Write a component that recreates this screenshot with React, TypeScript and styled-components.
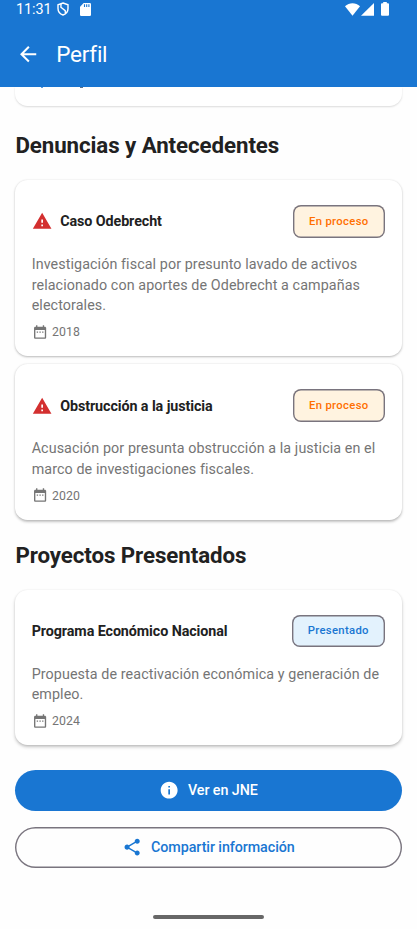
import React from "react";
import styled, { createGlobalStyle } from "styled-components";

const Global = createGlobalStyle`
  *, *::before, *::after { box-sizing: border-box; }
  body { margin: 0; background: #fefefe; font-family: Roboto, "Noto Sans", sans-serif; }
`;

const Screen = styled.div`
  width: 417px;
  height: 929px;
  overflow: hidden;
  display: flex;
  flex-direction: column;
  background: #fefefe;
  color: #212121;
`;

const Header = styled.header`
  flex: none;
  height: 87px;
  background: #1976d2;
  color: #fff;
`;

const StatusBar = styled.div`
  height: 18px;
  display: flex;
  align-items: center;
  justify-content: space-between;
  padding: 0 28px 0 16px;
`;

const StatusGroup = styled.div<{ $gap: number }>`
  display: flex;
  align-items: center;
  gap: ${(p) => p.$gap}px;
`;

const Clock = styled.span`
  width: 35.5px;
  padding-top: 2px;
  font-size: 14.4px;
  line-height: 18px;
  letter-spacing: -0.08px;
`;

const AppBar = styled.div`
  display: flex;
  align-items: center;
  height: 72px;
  padding: 0 0 0 16px;
  gap: 16px;
`;

const AppTitle = styled.h1`
  margin: 0;
  font-size: 22.5px;
  font-weight: 400;
  line-height: 28px;
  letter-spacing: -0.25px;
`;

const Content = styled.main`
  display: flex;
  flex-direction: column;
  padding: 0 15px;
`;

const Card = styled.section<{ $depth: number }>`
  border-radius: 12.5px;
  background: #fff;
  padding: 25px 17px 16.3px 16.7px;
  box-shadow: 0 ${(p) => p.$depth}px ${(p) => p.$depth + 1.5}px rgba(0, 0, 0, 0.22),
    0 0.5px 2px rgba(0, 0, 0, 0.07);
`;

const PreviousCard = styled.section`
  height: 19px;
  border-radius: 0 0 12.5px 12.5px;
  background: #fff;
  box-shadow: 0 1px 2px rgba(0, 0, 0, 0.14);
`;

const Descenders = styled.div`
  display: flex;
  gap: 36.5px;
  padding-left: 26px;
`;

const Descender = styled.span<{ $width: number; $color: string }>`
  width: ${(p) => p.$width}px;
  height: 1px;
  background: ${(p) => p.$color};
`;

const SectionTitle = styled.h2<{ $top: number; $bottom: number }>`
  margin: ${(p) => p.$top}px 0 ${(p) => p.$bottom}px 0.4px;
  font-size: 22.3px;
  font-weight: 700;
  line-height: 28px;
  letter-spacing: -0.08px;
  white-space: nowrap;
`;

const CardHead = styled.div`
  display: flex;
  align-items: center;
  height: 32.5px;
`;

const CardTitle = styled.h3`
  margin: 0;
  flex: 1;
  font-size: 14.3px;
  font-weight: 700;
  line-height: 20px;
  letter-spacing: -0.08px;
  white-space: nowrap;
`;

const WarningSlot = styled.span`
  display: flex;
  width: 28.5px;
  color: #d32f2f;
`;

const Chip = styled.span<{ $tone: "orange" | "blue" }>`
  height: 32.5px;
  width: ${(p) => (p.$tone === "orange" ? 92.5 : 93.5)}px;
  display: flex;
  align-items: center;
  justify-content: center;
  box-shadow: inset 0 0 0 1.4px #79747e;
  border-radius: 8px;
  font-size: 11.3px;
  font-weight: 500;
  letter-spacing: 0.33px;
  white-space: nowrap;
  color: ${(p) => (p.$tone === "orange" ? "#ff6f00" : "#1976d2")};
  background: ${(p) => (p.$tone === "orange" ? "#fff3e0" : "#e3f2fd")};
`;

const Description = styled.p`
  margin: 16.5px 0 8px;
  font-size: 14.3px;
  line-height: 20.5px;
  letter-spacing: 0.09px;
  color: #757575;
  white-space: nowrap;
`;

const DateRow = styled.div`
  display: flex;
  align-items: center;
  gap: 4.2px;
  height: 16.2px;
  font-size: 12.3px;
  letter-spacing: 0.1px;
  color: #757575;
`;

const Button = styled.button<{ $outlined?: boolean }>`
  display: flex;
  align-items: center;
  justify-content: center;
  gap: 8.4px;
  width: 100%;
  height: 41px;
  flex: none;
  margin: 0;
  padding: 0;
  border: 0;
  border-radius: 21px;
  box-shadow: ${(p) => (p.$outlined ? "inset 0 0 0 1.4px #79747e" : "none")};
  background: ${(p) => (p.$outlined ? "transparent" : "#1976d2")};
  color: ${(p) => (p.$outlined ? "#1976d2" : "#fff")};
  font: 500 14.3px/20px Roboto, "Noto Sans", sans-serif;
  letter-spacing: -0.08px;
`;

const Actions = styled.div`
  display: flex;
  flex-direction: column;
  gap: 16px;
  margin-top: 24.6px;
`;

const HomeIndicator = styled.div`
  width: 111px;
  height: 4px;
  border-radius: 2px;
  background: #676767;
  margin: 47px auto 0;
`;

const Icon = ({ d, size }: { d: string; size: number }) => (
  <svg width={size} height={size} viewBox="0 0 24 24" fill="currentColor" fillRule="evenodd">
    <path d={d} />
  </svg>
);

const BACK = "M20 11H7.83l5.59-5.59L12 4l-8 8 8 8 1.41-1.41L7.83 13H20v-2z";
const CALENDAR =
  "M9 11H7v2h2v-2zm4 0h-2v2h2v-2zm4 0h-2v2h2v-2zm2-7h-1V2h-2v2H8V2H6v2H5c-1.11 0-1.99.9-1.99 2L3 20c0 1.1.89 2 2 2h14c1.1 0 2-.9 2-2V6c0-1.1-.9-2-2-2zm0 16H5V9h14v11z";
const WARNING = "M1 21h22L12 2 1 21zm12-3h-2v-2h2v2zm0-4h-2v-4h2v4z";
const INFO =
  "M12 2C6.48 2 2 6.48 2 12s4.48 10 10 10 10-4.48 10-10S17.52 2 12 2zm1 15h-2v-6h2v6zm0-8h-2V7h2v2z";
const SHARE =
  "M18 16.08c-.76 0-1.44.3-1.96.77L8.91 12.7c.05-.23.09-.46.09-.7s-.04-.47-.09-.7l7.05-4.11c.54.5 1.25.81 2.04.81 1.66 0 3-1.34 3-3s-1.34-3-3-3-3 1.34-3 3c0 .24.04.47.09.7L8.04 9.81C7.5 9.31 6.79 9 6 9c-1.66 0-3 1.34-3 3s1.34 3 3 3c.79 0 1.5-.31 2.04-.81l7.12 4.16c-.05.21-.08.43-.08.65 0 1.61 1.31 2.92 2.92 2.92 1.61 0 2.92-1.31 2.92-2.92s-1.31-2.92-2.92-2.92z";

const ShieldIcon = () => (
  <svg width="12" height="14" viewBox="0 0 12 14" fill="none" stroke="currentColor" strokeWidth="1.4">
    <path d="M6 1 11 2.8V6.5C11 9.6 8.9 12 6 13 3.1 12 1 9.6 1 6.5V2.8Z" />
    <path d="M4 2 3.9 5.2 8.2 8.6 8.4 11.4" />
  </svg>
);

const SdIcon = () => (
  <svg width="11" height="13" viewBox="0 0 11 13">
    <path fill="currentColor" d="M3.7 0H9.8Q11 0 11 1.2V11.8Q11 13 9.8 13H1.2Q0 13 0 11.8V3.8Z" />
    <path stroke="#1976d2" strokeWidth="1.1" d="M4.5 1.3V4M6.7 1.3V4M8.9 1.3V4" />
  </svg>
);

const WifiIcon = () => (
  <svg width="15" height="13" viewBox="0 0 15 13" fill="currentColor">
    <path d="M7.5 12.8 0 3.2C4.3-.7 10.7-.7 15 3.2Z" />
  </svg>
);

const SignalIcon = () => (
  <svg width="13" height="13" viewBox="0 0 13 13" fill="currentColor">
    <path d="M13 0V12.7H0Z" />
  </svg>
);

const BatteryIcon = () => (
  <svg width="8" height="14" viewBox="0 0 8 14" fill="currentColor">
    <path d="M2.2 0H5.8V1.3H7Q8 1.3 8 2.3V12.8Q8 13.8 7 13.8H1Q0 13.8 0 12.8V2.3Q0 1.3 1 1.3H2.2Z" />
  </svg>
);

type RecordProps = {
  title: string;
  status: string;
  tone: "orange" | "blue";
  lines: string[];
  year: string;
  depth: number;
  warning?: boolean;
};

const RecordCard = ({ title, status, tone, lines, year, depth, warning }: RecordProps) => (
  <Card $depth={depth}>
    <CardHead>
      {warning && (
        <WarningSlot>
          <Icon d={WARNING} size={20.3} />
        </WarningSlot>
      )}
      <CardTitle>{title}</CardTitle>
      <Chip $tone={tone}>{status}</Chip>
    </CardHead>
    <Description>
      {lines.map((line) => (
        <React.Fragment key={line}>
          {line}
          <br />
        </React.Fragment>
      ))}
    </Description>
    <DateRow>
      <Icon d={CALENDAR} size={16.2} />
      {year}
    </DateRow>
  </Card>
);

const CardStack = styled.div`
  display: flex;
  flex-direction: column;
  gap: 8.4px;
`;

export default function App() {
  return (
    <Screen>
      <Global />
      <Header>
        <StatusBar>
          <StatusGroup $gap={5.5}>
            <Clock>11:31</Clock>
            <StatusGroup $gap={11}>
              <ShieldIcon />
              <SdIcon />
            </StatusGroup>
          </StatusGroup>
          <StatusGroup $gap={7}>
            <StatusGroup $gap={1.5}>
              <WifiIcon />
              <SignalIcon />
            </StatusGroup>
            <BatteryIcon />
          </StatusGroup>
        </StatusBar>
        <AppBar>
          <Icon d={BACK} size={24.3} />
          <AppTitle>Perfil</AppTitle>
        </AppBar>
      </Header>
      <Content>
        <PreviousCard>
          <Descenders>
            <Descender $width={2} $color="#5c9cdc" />
            <Descender $width={3} $color="#5a6f88" />
          </Descenders>
        </PreviousCard>
        <SectionTitle $top={24.7} $bottom={21.4}>Denuncias y Antecedentes</SectionTitle>
        <CardStack>
          <RecordCard
            warning
            title="Caso Odebrecht"
            status="En proceso"
            tone="orange"
            depth={1}
            lines={[
              "Investigación fiscal por presunto lavado de activos",
              "relacionado con aportes de Odebrecht a campañas",
              "electorales.",
            ]}
            year="2018"
          />
          <RecordCard
            warning
            title="Obstrucción a la justicia"
            status="En proceso"
            tone="orange"
            depth={1.3}
            lines={[
              "Acusación por presunta obstrucción a la justicia en el",
              "marco de investigaciones fiscales.",
            ]}
            year="2020"
          />
        </CardStack>
        <SectionTitle $top={20.8} $bottom={20.9}>Proyectos Presentados</SectionTitle>
        <RecordCard
          title="Programa Económico Nacional"
          status="Presentado"
          tone="blue"
          depth={2}
          lines={["Propuesta de reactivación económica y generación de", "empleo."]}
          year="2024"
        />
        <Actions>
          <Button>
            <Icon d={INFO} size={20.3} />
            Ver en JNE
          </Button>
          <Button $outlined>
            <Icon d={SHARE} size={20.3} />
            Compartir información
          </Button>
        </Actions>
      </Content>
      <HomeIndicator />
    </Screen>
  );
}
